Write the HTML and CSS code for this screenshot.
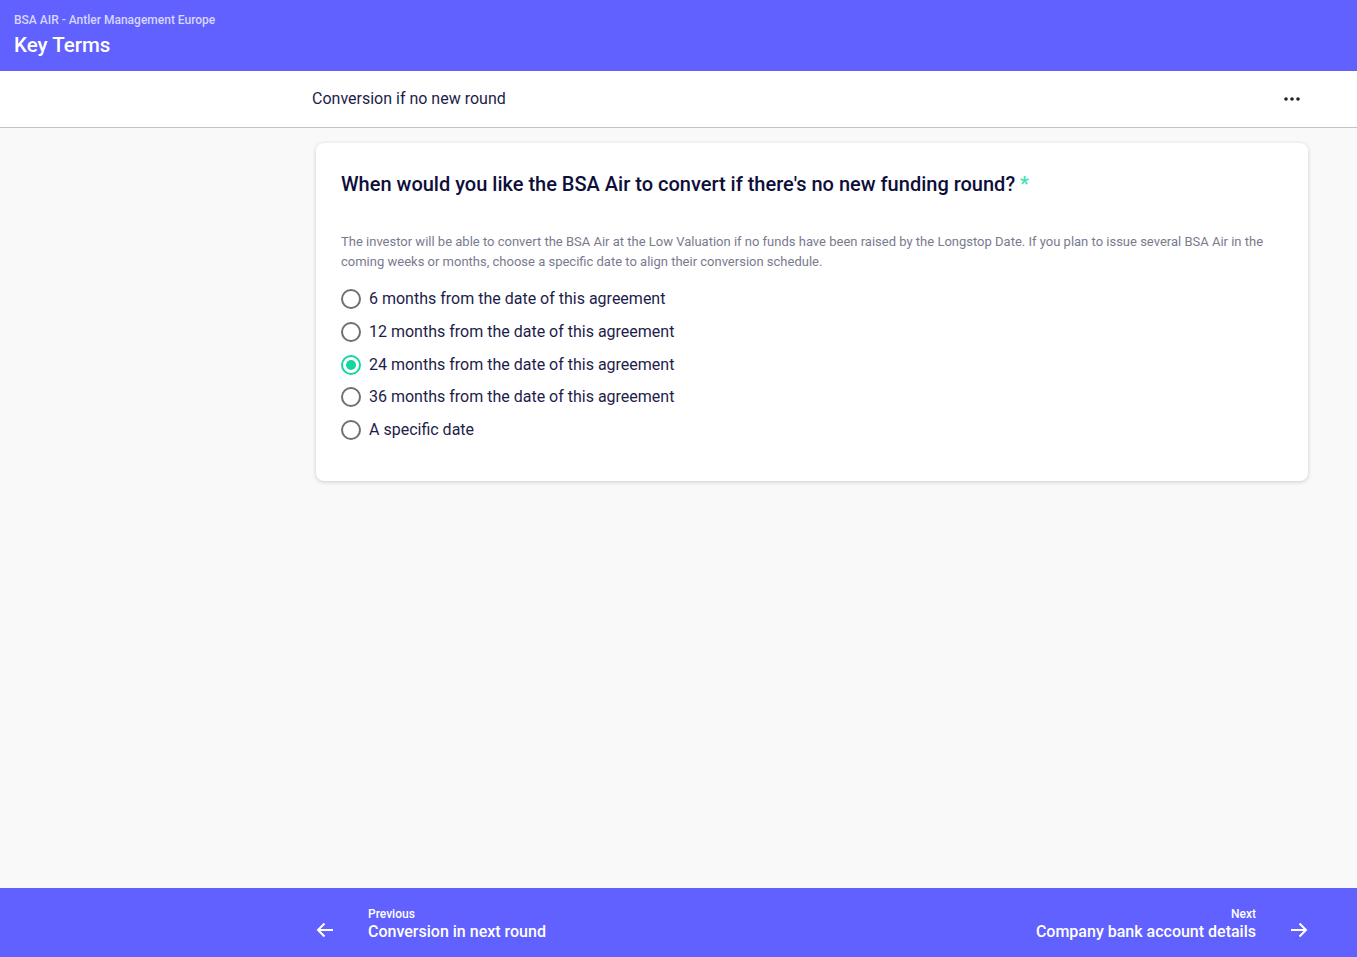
FILE: index.html
```html
<!DOCTYPE html>
<html lang="en">
<head>
    <meta charset="UTF-8">
    <title>Key Terms</title>
    <link rel="stylesheet" href="styles.css">
</head>
<body>
    <!-- Header -->
    <header class="top-bar">
        <div class="doc-name">BSA AIR - Antler Management Europe</div>
        <div class="section-name">Key Terms</div>
    </header>

    <div class="step-bar">
        <div class="column step-row">
            <span class="step-title">Conversion if no new round</span>
            <span class="more-btn">
                <svg width="16" height="4" viewBox="0 0 16 4"><circle cx="2" cy="2" r="1.8" fill="#222"/><circle cx="8" cy="2" r="1.8" fill="#222"/><circle cx="14" cy="2" r="1.8" fill="#222"/></svg>
            </span>
        </div>
    </div>

    <main class="column">
        <div class="card">
            <h2 class="question">When would you like the BSA Air to convert if there's no new funding round? <span class="required">*</span></h2>
            <p class="hint">The investor will be able to convert the BSA Air at the Low Valuation if no funds have been raised by the Longstop Date. If you plan to issue several BSA Air in the coming weeks or months, choose a specific date to align their conversion schedule.</p>
            <div class="options">
                <label class="option"><span class="radio"></span>6 months from the date of this agreement</label>
                <label class="option"><span class="radio"></span>12 months from the date of this agreement</label>
                <label class="option"><span class="radio checked"></span>24 months from the date of this agreement</label>
                <label class="option"><span class="radio"></span>36 months from the date of this agreement</label>
                <label class="option"><span class="radio"></span>A specific date</label>
            </div>
        </div>
    </main>

    <!-- Navigation -->
    <footer class="bottom-bar">
        <div class="column nav-row">
            <div class="nav-link">
                <svg class="arrow" width="18" height="16" viewBox="0 0 18 16"><path d="M17 8H2M8.5 1.5L2 8l6.5 6.5" fill="none" stroke="#fff" stroke-width="2"/></svg>
                <div class="nav-text">
                    <div class="nav-label">Previous</div>
                    <div class="nav-title">Conversion in next round</div>
                </div>
            </div>
            <div class="nav-link next">
                <div class="nav-text">
                    <div class="nav-label">Next</div>
                    <div class="nav-title">Company bank account details</div>
                </div>
                <svg class="arrow" width="18" height="16" viewBox="0 0 18 16"><path d="M1 8h15M9.5 1.5L16 8l-6.5 6.5" fill="none" stroke="#fff" stroke-width="2"/></svg>
            </div>
        </div>
    </footer>
</body>
</html>
```

FILE: styles.css
```css
body {
    font-family: Roboto, "Noto Sans", sans-serif;
    background-color: #f9f9f9;
    margin: 0;
    color: #14143c;
    min-height: 957px;
    display: flex;
    flex-direction: column;
}
.top-bar {
    background-color: #6161ff;
    height: 71px;
    box-sizing: border-box;
    padding: 12px 14px 0;
}
.doc-name {
    font-size: 12px;
    font-weight: 500;
    color: #d6d6ff;
    line-height: 16px;
}
.section-name {
    font-size: 20.5px;
    font-weight: 500;
    color: #fff;
    line-height: 26px;
    margin-top: 4px;
}
.column {
    margin-left: 312px;
    width: 996px;
}
.step-bar {
    background-color: #fff;
    height: 56px;
    border-bottom: 1px solid #c4c4c4;
}
.step-row {
    height: 100%;
    display: flex;
    align-items: center;
    justify-content: space-between;
}
.step-title {
    font-size: 16px;
    color: #1d1d4a;
    margin-top: -2px;
}
.more-btn {
    display: flex;
    margin-right: 8px;
}
main {
    flex: 1;
    padding-top: 15px;
}
.card {
    background-color: #fff;
    border-radius: 8px;
    box-shadow: 0 1px 4px rgba(0, 0, 0, 0.18);
    margin-left: 4px;
    padding: 28px 25px 41px;
}
.question {
    font-size: 20px;
    font-weight: 500;
    line-height: 26px;
    margin: 0;
    color: #0e0e3a;
}
.required {
    color: #3ee3b4;
}
.hint {
    font-size: 13px;
    line-height: 20px;
    color: #7a7a8e;
    margin: 35px 0 17px;
}
.options {
    display: flex;
    flex-direction: column;
    gap: 12.75px;
}
.option {
    display: flex;
    align-items: center;
    font-size: 16px;
    line-height: 20px;
    color: #1d1d4a;
}
.radio {
    width: 20px;
    height: 20px;
    box-sizing: border-box;
    border: 2px solid #707070;
    border-radius: 50%;
    margin-right: 8px;
    position: relative;
}
.radio.checked {
    border-color: #15d6a0;
}
.radio.checked::after {
    content: "";
    position: absolute;
    left: 3px;
    top: 3px;
    width: 10px;
    height: 10px;
    border-radius: 50%;
    background-color: #15d6a0;
}
.bottom-bar {
    background-color: #6161ff;
    height: 69px;
    color: #fff;
}
.nav-row {
    height: 100%;
    display: flex;
    align-items: center;
    justify-content: space-between;
}
.nav-link {
    display: flex;
    align-items: center;
}
.nav-link .arrow {
    margin-left: 4px;
    margin-top: 14px;
}
.nav-link .nav-text {
    margin-left: 34px;
    padding-top: 4px;
}
.nav-link.next .nav-text {
    margin-left: 0;
    text-align: right;
}
.nav-link.next .arrow {
    margin-left: 34px;
    margin-right: 0;
}
.nav-label {
    font-size: 12px;
    font-weight: 500;
    line-height: 14px;
}
.nav-title {
    font-size: 16px;
    font-weight: 500;
    line-height: 20px;
    margin-top: 1px;
}
```
